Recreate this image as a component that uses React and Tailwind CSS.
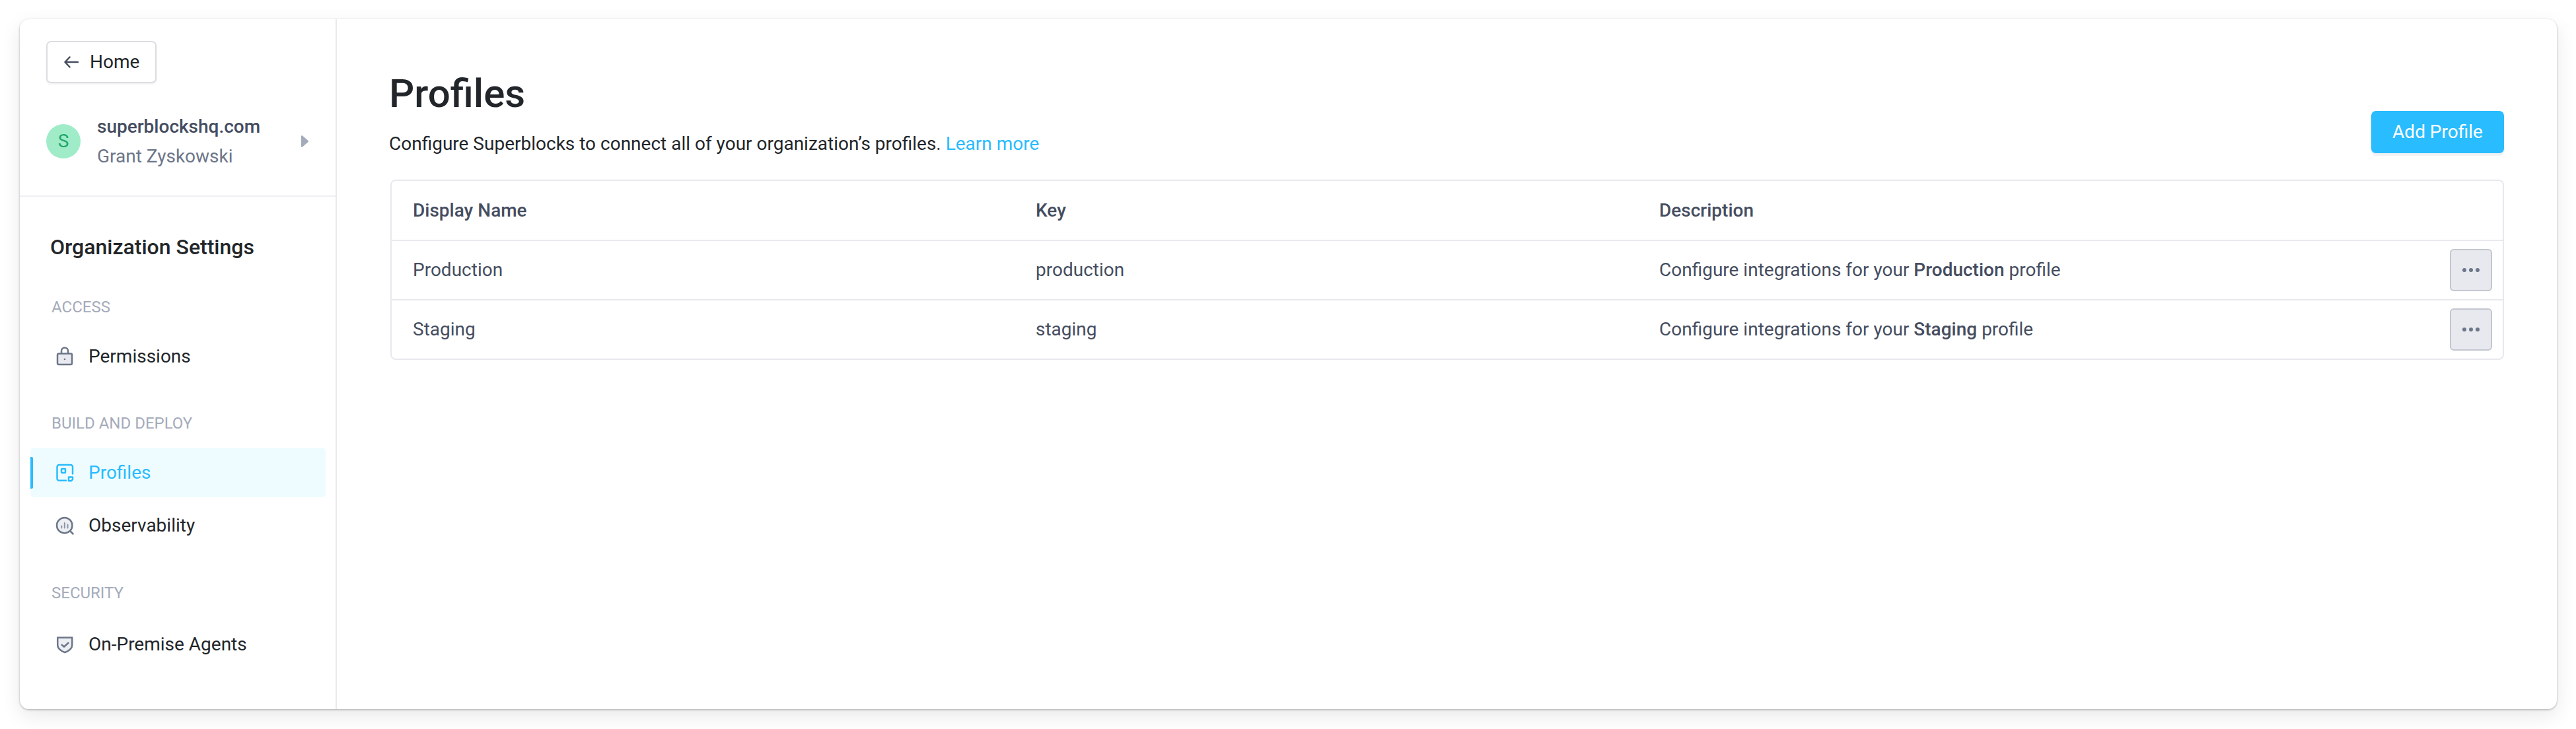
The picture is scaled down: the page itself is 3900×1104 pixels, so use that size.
import React from 'react';

const BackArrow = () => (
  <svg width="22" height="18" viewBox="0 0 22 18" fill="none" stroke="#454d5f" strokeWidth="2.5" strokeLinecap="round" strokeLinejoin="round">
    <path d="M21 9H1.5M8.5 1.5L1.5 9l7 7.5" />
  </svg>
);

const LockIcon = () => (
  <svg width="40" height="40" viewBox="0 0 40 40" fill="none" stroke="#6c7689" strokeWidth="2.5">
    <rect x="9" y="15.5" width="22" height="16.5" rx="2" fill="#e8eaef" />
    <path d="M15 15.5V11.5a5 5 0 0 1 10 0v4" />
    <circle cx="20" cy="24" r="1.3" fill="#6c7689" stroke="none" />
  </svg>
);

const ProfileIcon = () => (
  <svg width="40" height="40" viewBox="0 0 40 40" fill="none" stroke="#29bcff" strokeWidth="2.5" strokeLinejoin="round" strokeLinecap="round">
    <path d="M22 31.8H11.5a3 3 0 0 1-3-3V11a3 3 0 0 1 3-3h17.5a3 3 0 0 1 3 3v10.5" />
    <rect x="15" y="14" width="6" height="6" rx="0.8" />
    <path d="M26 26.5h6v3.5l-2 2.2h-4z" />
  </svg>
);

const ObservabilityIcon = () => (
  <svg width="40" height="40" viewBox="0 0 40 40" fill="none" stroke="#6c7689" strokeWidth="2.5" strokeLinecap="round">
    <circle cx="19.7" cy="19.7" r="11.7" fill="#eceef2" />
    <path d="M28.5 28.5l4 4" />
    <path d="M15.3 20.5v3M19.8 16v7.5M24.5 18.5v5" strokeWidth="2" stroke="#8b93a5" />
  </svg>
);

const ShieldIcon = () => (
  <svg width="40" height="40" viewBox="0 0 40 40" fill="none" stroke="#6c7689" strokeWidth="2.5" strokeLinecap="round" strokeLinejoin="round">
    <path d="M9.2 9.5h22v11.5c0 5-4.5 8.500-11 11.200-6.500-2.700-11-6.200-11-11.200z" fill="#eceef2" />
    <path d="M15.500 20.500l3.500 3 6.500-6" />
  </svg>
);

const NavItem = ({ icon, label, active }) => (
  <div className={`relative flex h-[75px] items-center rounded-[5px] pl-[32px] ${active ? 'bg-[#effcff] text-[#29bcff]' : 'text-[#22262a]'}`}>
    {active && <span className="absolute left-0 top-[14px] h-[48px] w-[4px] rounded-r-[2px] bg-[#29bcff]" />}
    {icon}
    <span className="ml-[16px] text-[28px]">{label}</span>
  </div>
);

const SectionLabel = ({ children }) => (
  <div className="pl-[32px] text-[24px] leading-[30px] text-[#a4abbb]">{children}</div>
);

const DotsButton = () => (
  <button className="flex h-[64px] w-[64px] items-center justify-center gap-[4px] rounded-[6px] border-2 border-[#c3c7d1] bg-[#e8e9ee]">
    <span className="h-[6px] w-[6px] rounded-full bg-[#6c7689]" />
    <span className="h-[6px] w-[6px] rounded-full bg-[#6c7689]" />
    <span className="h-[6px] w-[6px] rounded-full bg-[#6c7689]" />
  </button>
);

const profiles = [
  { name: 'Production', key: 'production' },
  { name: 'Staging', key: 'staging' },
];

export default function App() {
  return (
    <div className="flex h-screen w-screen bg-white pb-[30px] pl-[30px] pr-[29px] pt-[29px] font-[Roboto,sans-serif]">
      <div className="flex w-full overflow-hidden rounded-[14px] bg-white shadow-[0_1px_3px_rgba(0,0,0,0.3),0_10px_30px_rgba(0,0,0,0.09)]">
        <aside className="w-[480px] shrink-0 border-r-2 border-[#e8e9ee]">
          <div className="border-b-2 border-[#eeeff2] pb-[37px] pl-[40px] pr-[41px] pt-[33px]">
            <button className="flex h-[64px] w-[167px] items-center rounded-[7px] border-2 border-[#dcdde1] pl-[25px] text-[28px] text-[#22262a] shadow-[0_2px_3px_rgba(0,0,0,0.05)]">
              <BackArrow />
              <span className="ml-[17px]">Home</span>
            </button>
            <div className="mt-[43px] flex items-center">
              <div className="flex h-[52px] w-[52px] items-center justify-center rounded-full bg-[#a0ecc9] text-[28px] text-[#1fa76c]">S</div>
              <div className="ml-[25px] flex-1">
                <div className="text-[28px] font-medium leading-[45px] text-[#454d5f]">superblockshq.com</div>
                <div className="text-[28px] leading-[45px] text-[#6c7689]">Grant Zyskowski</div>
              </div>
              <svg width="11" height="18" viewBox="0 0 11 18" fill="#a4abbb">
                <path d="M0 1.500C0 .3 1 -.3 2 .5l8.500 7.500c.6.5.6 1.500 0 2L2 17.500c-1 .8-2 .2-2-1z" />
              </svg>
            </div>
          </div>
          <div className="pl-[16px] pr-[15px]">
            <div className="mt-[54px] pl-[30px] text-[32px] font-medium leading-[44px] text-[#22262a]">Organization Settings</div>
            <div className="mt-[54px]"><SectionLabel>ACCESS</SectionLabel></div>
            <div className="mt-[22px]"><NavItem icon={<LockIcon />} label="Permissions" /></div>
            <div className="mt-[49px]"><SectionLabel>BUILD AND DEPLOY</SectionLabel></div>
            <div className="mt-[22px] flex flex-col gap-[5px]">
              <NavItem active icon={<ProfileIcon />} label="Profiles" />
              <NavItem icon={<ObservabilityIcon />} label="Observability" />
            </div>
            <div className="mt-[50px]"><SectionLabel>SECURITY</SectionLabel></div>
            <div className="mt-[25px]"><NavItem icon={<ShieldIcon />} label="On-Premise Agents" /></div>
          </div>
        </aside>
        <main className="flex-1 pl-[79px] pr-[80px] pt-[77px]">
          <div className="flex items-end justify-between">
            <div>
              <h1 className="text-[60px] font-medium leading-[72px] text-[#22262a]">Profiles</h1>
              <p className="mt-[20px] text-[28px] leading-[40px] text-[#22262a]">
                Configure Superblocks to connect all of your organization’s profiles. <span className="text-[#29bcff]">Learn more</span>
              </p>
            </div>
            <button className="mb-[6px] h-[64px] w-[201px] rounded-[7px] bg-[#29bcff] text-[28px] text-white shadow-[0_4px_0_#f1f2f4]">Add Profile</button>
          </div>
          <div className="ml-[2px] mt-[34px] overflow-hidden rounded-[8px] border-2 border-[#e8e9ee] text-[28px] text-[#454d5f]">
            <div className="flex h-[89px] items-center pl-[32px] font-medium">
              <div className="w-[943px]">Display Name</div>
              <div className="w-[944px]">Key</div>
              <div>Description</div>
            </div>
            {profiles.map((profile) => (
              <div key={profile.key} className="flex h-[90px] items-center border-t-2 border-[#e8e9ee] pl-[32px] pr-[16px]">
                <div className="w-[943px]">{profile.name}</div>
                <div className="w-[944px]">{profile.key}</div>
                <div className="flex-1">
                  Configure integrations for your <span className="font-medium">{profile.name}</span> profile
                </div>
                <DotsButton />
              </div>
            ))}
          </div>
        </main>
      </div>
    </div>
  );
}
